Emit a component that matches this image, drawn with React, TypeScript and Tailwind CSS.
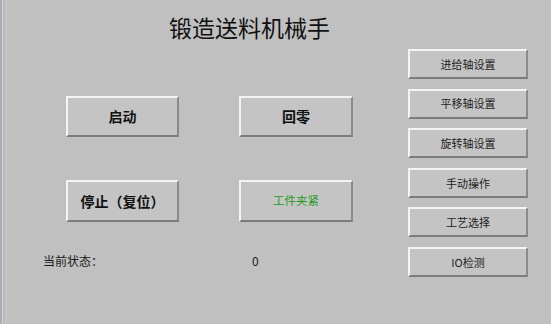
import React from 'react';

const sideButtons = ['进给轴设置', '平移轴设置', '旋转轴设置', '手动操作', '工艺选择', 'IO检测'];

const Btn = ({ label, className, textClass }: { label: string; className: string; textClass: string }) => (
  <button
    className={`flex items-center justify-center bg-[#c4c4c4] border-2 border-t-[#f4f4f4] border-l-[#f4f4f4] border-b-[#7c7c7c] border-r-[#8a8a8a] ${className}`}
  >
    <span className={textClass}>{label}</span>
  </button>
);

const App = () => {
  return (
    <div
      className="w-[551px] h-[324px] bg-[#c0c0c0] flex overflow-hidden"
      style={{ fontFamily: '"Noto Sans CJK SC", "Noto Sans", sans-serif' }}
    >
      <div className="w-[7px] flex">
        <div className="w-[2px] bg-[#a9adb6]" />
        <div className="w-[1px] bg-[#d4d6da]" />
        <div className="w-[2px] bg-[#b6b9bf]" />
        <div className="w-[2px] bg-[#c6c6c2]" />
      </div>

      <div className="w-[401px] flex flex-col">
        <h1 className="pl-[162px] pt-[12px] h-[40px] text-[23px] leading-[30px] text-[#111] font-normal">
          锻造送料机械手
        </h1>

        <div className="pl-[59px] pt-[56px] grid grid-cols-[113px_114px] gap-x-[60px] gap-y-[43px] w-max">
          <Btn label="启动" className="h-[41px]" textClass="text-[14px] font-bold text-[#111]" />
          <Btn label="回零" className="h-[41px]" textClass="text-[14px] font-bold text-[#111]" />
          <Btn label="停止（复位）" className="h-[42px]" textClass="text-[14px] font-bold text-[#111]" />
          <Btn label="工件夹紧" className="h-[42px]" textClass="text-[11.5px] text-[#1f9a1f]" />
        </div>

        <div className="flex items-center pl-[36px] pt-[30px] text-[12px] text-[#1a1a1a]">
          <span className="w-[209px]">当前状态：</span>
          <span>0</span>
        </div>
      </div>

      <div className="flex flex-col gap-[9.6px] pt-[49px]">
        {sideButtons.map((b) => (
          <Btn key={b} label={b} className="w-[120px] h-[30px]" textClass="text-[11px] text-[#1e1e1e]" />
        ))}
      </div>
    </div>
  );
};

export default App;
